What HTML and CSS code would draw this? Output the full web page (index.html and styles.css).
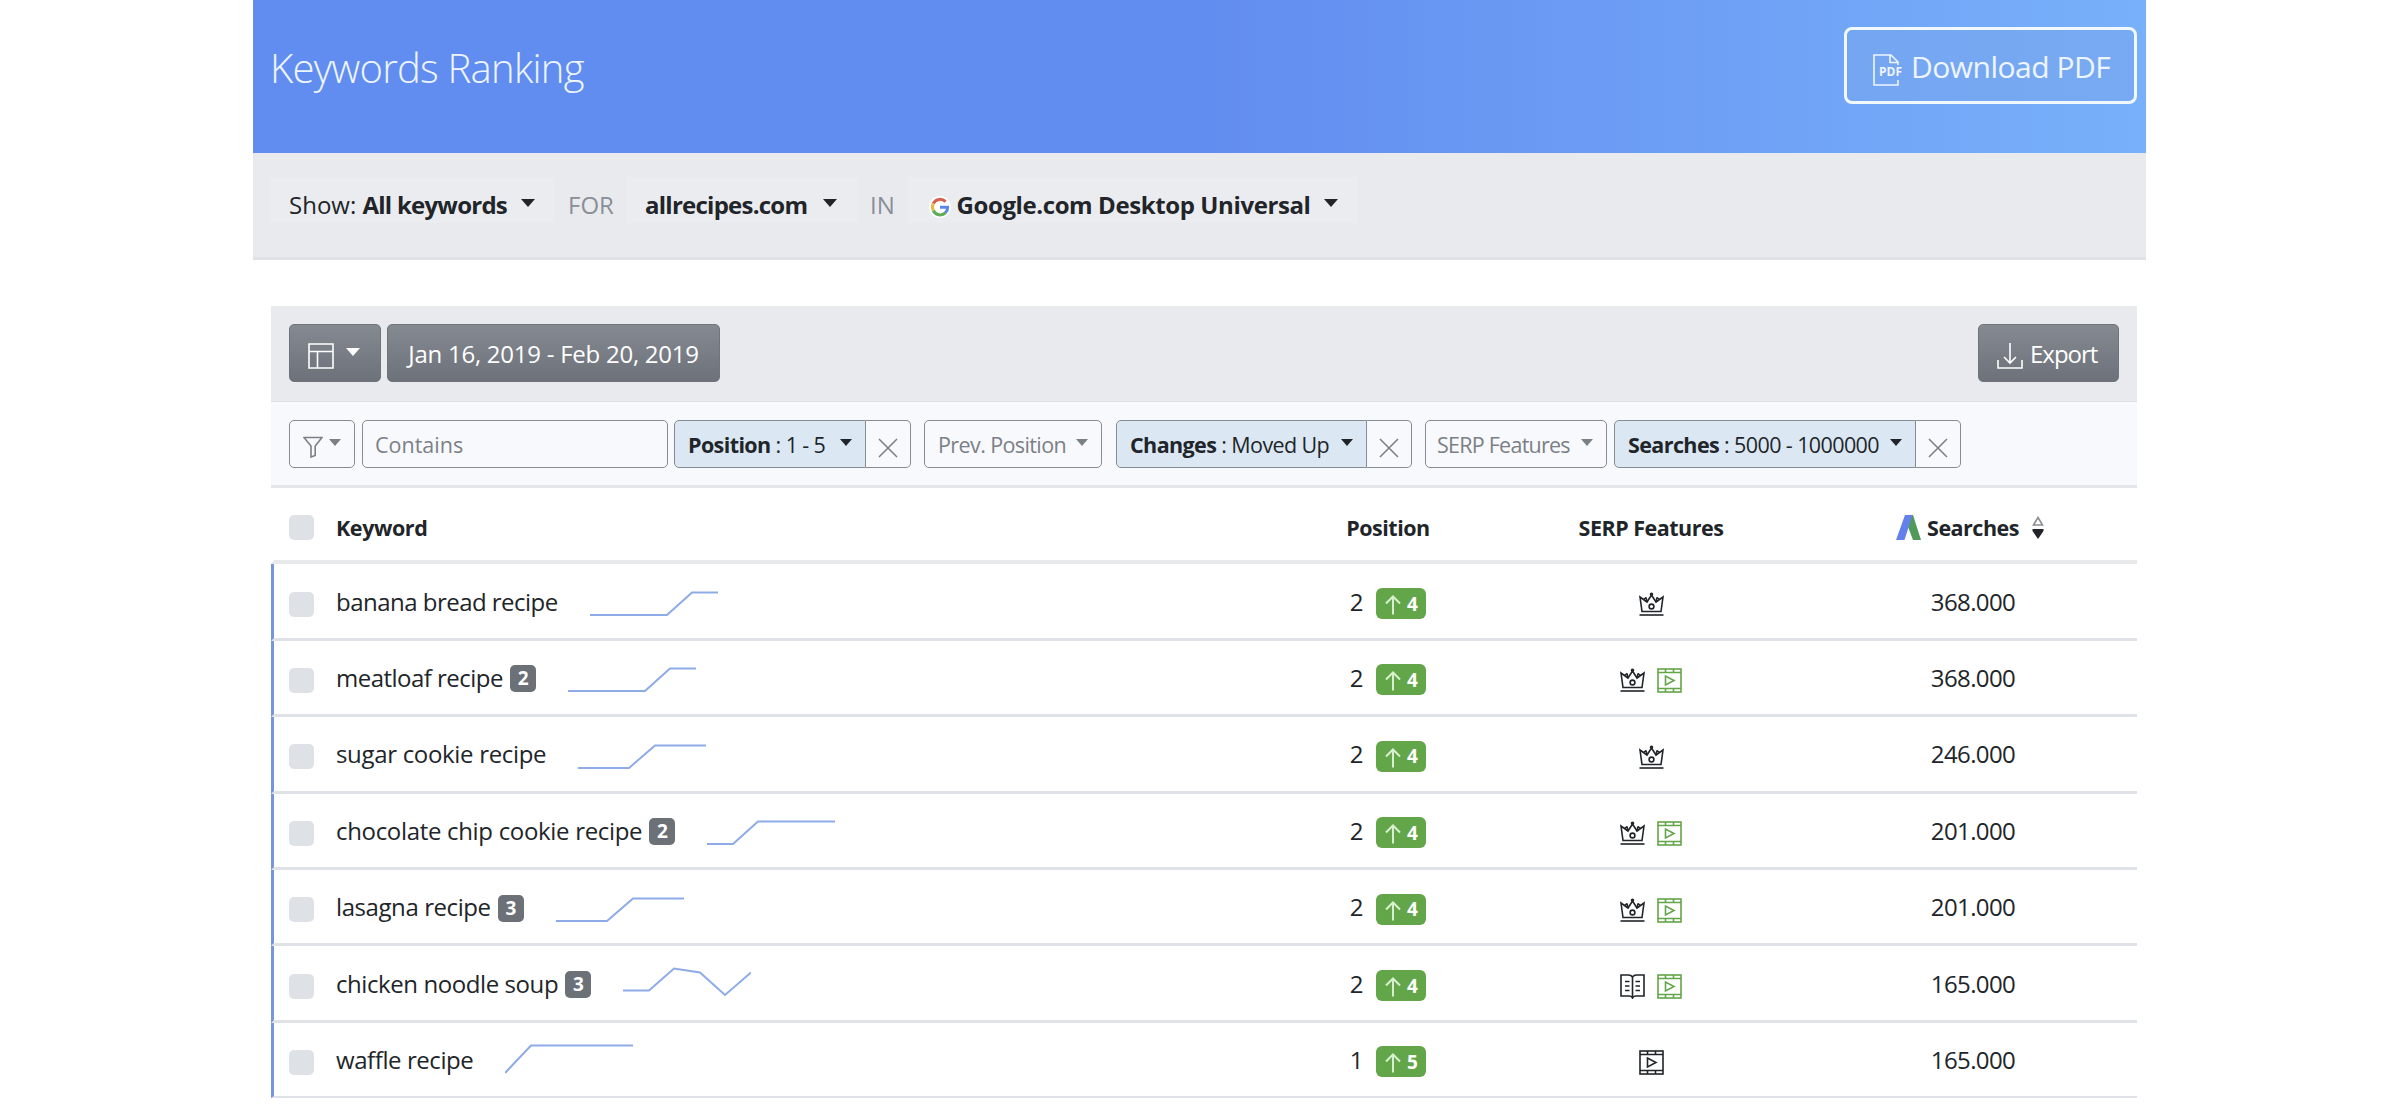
FILE: index.html
```html
<!DOCTYPE html>
<html lang="en">
<head>
    <meta charset="UTF-8">
    <meta name="viewport" content="width=device-width, initial-scale=1.0">
    <title>Keywords Ranking</title>
    <link rel="stylesheet" href="styles.css">
</head>
<body>

    <!-- shared icons -->
    <svg class="sprite">
        <symbol id="close" viewBox="0 0 20 20"><path d="M1 1L19 19M19 1L1 19"/></symbol>
        <symbol id="up" viewBox="0 0 16 20"><path d="M8 19.500V2M1 8.500L8 1.500L15 8.500"/></symbol>
        <symbol id="crown" viewBox="0 0 25 25">
            <path d="M3 19.500H22L24 5L17 10L12.500 3L8 10L1 5Z"/>
            <path d="M7 5.500L8 10M18 5.500L17 10M7 5.500L4.500 7.500M18 5.500L20.500 7.500"/>
            <circle cx="12.500" cy="2.300" r="1"/>
            <circle cx="12.500" cy="14.500" r="2.400"/>
            <path d="M0.500 23H24.500"/>
        </symbol>
        <symbol id="film" viewBox="0 0 25 25">
            <rect x="1" y="1" width="23" height="23"/>
            <path d="M1 4.500H24M1 20.500H24M8.500 1V4.500M16.500 1V4.500M8.500 20.500V24M16.500 20.500V24M8.500 8V17L17 12.500Z"/>
        </symbol>
        <symbol id="book" viewBox="0 0 25 25">
            <path d="M12.500 3C11.500 1.500 10 1 8.500 1H1V22H9C10.500 22 12 22.500 12.500 24C13 22.500 14.500 22 16 22H24V1H16.500C15 1 13.500 1.500 12.500 3V24"/>
            <path d="M5 7.500H9.500M5 12H9.500M5 16.500H9.500M15.500 7.500H20M15.500 12H20M15.500 16.500H20"/>
        </symbol>
    </svg>

    <div class="page">
        <header class="header">
            <h1>Keywords Ranking</h1>
            <button class="download">
                <svg width="29" height="32" viewBox="0 0 29 32">
                    <path d="M25 11V8L18 1H1V31H25V26M17 1V8.500H25"/>
                    <text x="6" y="22">PDF</text>
                </svg>
                <span>Download PDF</span>
            </button>
        </header>

        <nav class="scope">
            <button class="scope-btn show"><span>Show: <b>All keywords</b></span><i class="caret"></i></button>
            <span class="word for">FOR</span>
            <button class="scope-btn site"><b>allrecipes.com</b><i class="caret"></i></button>
            <span class="word in">IN</span>
            <button class="scope-btn engine">
                <svg width="22" height="22" viewBox="0 0 22 22">
                    <circle cx="11" cy="11" r="11" fill="#fff" stroke="none"/>
                    <path d="M4.300 7.500A7.700 7.700 0 0 1 16.600 5.600" stroke="#d6604d"/>
                    <path d="M4.300 14.500A7.700 7.700 0 0 1 4.300 7.500" stroke="#e9b949"/>
                    <path d="M16.600 16.700A7.700 7.700 0 0 1 4.300 14.500" stroke="#5fae57"/>
                    <path d="M11 11.200H18.600A7.700 7.700 0 0 1 16.400 16.800" stroke="#5b86ea"/>
                </svg>
                <b>Google.com Desktop Universal</b><i class="caret"></i>
            </button>
        </nav>

        <main class="panel">
            <div class="toolbar">
                <button class="tool layout">
                    <svg width="26" height="26" viewBox="0 0 26 26"><path d="M1 1H25V25H1ZM1 8.500H25M9.500 8.500V25"/></svg>
                    <i class="caret"></i>
                </button>
                <button class="tool dates"><span>Jan 16, 2019 - Feb 20, 2019</span></button>
                <button class="tool export">
                    <svg width="26" height="26" viewBox="0 0 26 26"><path d="M1 17V25H25V17M13 0V19.500M7 14L13 20L19 14"/></svg>
                    <span>Export</span>
                </button>
            </div>

            <div class="filters">
                <button class="filter funnel">
                    <svg width="20" height="22" viewBox="0 0 20 22"><path d="M1 1.500H19L12.200 10V19.500L8 21V10Z"/></svg>
                    <i class="caret"></i>
                </button>
                <input class="contains" type="text" placeholder="Contains">
                <div class="group position">
                    <button class="filter on"><span><b>Position</b> : 1 - 5</span><i class="caret"></i></button>
                    <button class="filter remove"><svg><use href="#close"/></svg></button>
                </div>
                <button class="filter prev"><span>Prev. Position</span><i class="caret"></i></button>
                <div class="group changes">
                    <button class="filter on"><span><b>Changes</b> : Moved Up</span><i class="caret"></i></button>
                    <button class="filter remove"><svg><use href="#close"/></svg></button>
                </div>
                <button class="filter serp-filter"><span>SERP Features</span><i class="caret"></i></button>
                <div class="group searches">
                    <button class="filter on"><span><b>Searches</b> : 5000 - 1000000</span><i class="caret"></i></button>
                    <button class="filter remove"><svg><use href="#close"/></svg></button>
                </div>
            </div>

            <div class="table">
                <div class="row head">
                    <div class="cell keyword"><i class="check"></i><span>Keyword</span></div>
                    <div class="cell">Position</div>
                    <div class="cell">SERP Features</div>
                    <div class="cell volume">
                        <svg class="ads" width="25" height="25" viewBox="0 0 25 25">
                            <path d="M11 0H17L25 25H17L11 9Z" fill="#4f9a5b"/>
                            <path d="M9 0H16.500L8.500 25H0Z" fill="#6480ea"/>
                        </svg>
                        <span>Searches</span>
                        <svg class="sort" width="12" height="24" viewBox="0 0 12 24">
                            <path d="M6 1.500L10.500 9H1.500Z" fill="none" stroke="#8a8d91"/>
                            <path d="M0.500 13H11.500V15L6 23L0.500 15Z" fill="#212529"/>
                        </svg>
                    </div>
                </div>

                <div class="row">
                    <div class="cell keyword">
                        <i class="check"></i><span class="tight">banana bread recipe</span>
                        <svg class="spark" viewBox="0 0 128 48"><polyline points="0,38 77,38 102,15.500 128,15.500"/></svg>
                    </div>
                    <div class="cell">2 <span class="change"><svg><use href="#up"/></svg>4</span></div>
                    <div class="cell icons"><svg><use href="#crown"/></svg></div>
                    <div class="cell volume">368.000</div>
                </div>
                <div class="row">
                    <div class="cell keyword">
                        <i class="check"></i><span class="tight">meatloaf recipe</span><span class="count">2</span>
                        <svg class="spark" viewBox="0 0 128 48"><polyline points="0,38 77,38 102,15.500 128,15.500"/></svg>
                    </div>
                    <div class="cell">2 <span class="change"><svg><use href="#up"/></svg>4</span></div>
                    <div class="cell icons"><svg><use href="#crown"/></svg><svg class="green"><use href="#film"/></svg></div>
                    <div class="cell volume">368.000</div>
                </div>
                <div class="row">
                    <div class="cell keyword">
                        <i class="check"></i><span class="loose">sugar cookie recipe</span>
                        <svg class="spark" viewBox="0 0 128 48"><polyline points="0,38 51,38 77,15.500 128,15.500"/></svg>
                    </div>
                    <div class="cell">2 <span class="change"><svg><use href="#up"/></svg>4</span></div>
                    <div class="cell icons"><svg><use href="#crown"/></svg></div>
                    <div class="cell volume">246.000</div>
                </div>
                <div class="row">
                    <div class="cell keyword">
                        <i class="check"></i><span class="loose">chocolate chip cookie recipe</span><span class="count">2</span>
                        <svg class="spark" viewBox="0 0 128 48"><polyline points="0,38 26,38 51,15.500 128,15.500"/></svg>
                    </div>
                    <div class="cell">2 <span class="change"><svg><use href="#up"/></svg>4</span></div>
                    <div class="cell icons"><svg><use href="#crown"/></svg><svg class="green"><use href="#film"/></svg></div>
                    <div class="cell volume">201.000</div>
                </div>
                <div class="row">
                    <div class="cell keyword">
                        <i class="check"></i><span>lasagna recipe</span><span class="count">3</span>
                        <svg class="spark" viewBox="0 0 128 48"><polyline points="0,38 51,38 77,15.500 128,15.500"/></svg>
                    </div>
                    <div class="cell">2 <span class="change"><svg><use href="#up"/></svg>4</span></div>
                    <div class="cell icons"><svg><use href="#crown"/></svg><svg class="green"><use href="#film"/></svg></div>
                    <div class="cell volume">201.000</div>
                </div>
                <div class="row">
                    <div class="cell keyword">
                        <i class="check"></i><span>chicken noodle soup</span><span class="count">3</span>
                        <svg class="spark" viewBox="0 0 128 48"><polyline points="0,31.500 26,31.500 51,9.500 77,13.500 102,36 128,13.500"/></svg>
                    </div>
                    <div class="cell">2 <span class="change"><svg><use href="#up"/></svg>4</span></div>
                    <div class="cell icons"><svg><use href="#book"/></svg><svg class="green"><use href="#film"/></svg></div>
                    <div class="cell volume">165.000</div>
                </div>
                <div class="row">
                    <div class="cell keyword">
                        <i class="check"></i><span>waffle recipe</span>
                        <svg class="spark" viewBox="0 0 128 48"><polyline points="0,38 26,10.500 128,10.500"/></svg>
                    </div>
                    <div class="cell">1 <span class="change"><svg><use href="#up"/></svg>5</span></div>
                    <div class="cell icons"><svg><use href="#film"/></svg></div>
                    <div class="cell volume">165.000</div>
                </div>
            </div>
        </main>
    </div>

</body>
</html>
```
FILE: styles.css
```css
* {
    box-sizing: border-box;
}
body {
    margin: 0;
    height: 1111px;
    overflow: hidden;
    background-color: #fff;
    color: #212529;
    font-family: "Open Sans", "Noto Sans", sans-serif;
    font-size: 24px;
}
button, input {
    font-family: inherit;
    margin: 0;
    padding: 0;
    border: none;
    background: none;
    color: inherit;
    white-space: nowrap;
}
button {
    display: flex;
    align-items: center;
    cursor: pointer;
}
svg {
    fill: none;
    stroke: currentColor;
    stroke-width: 1.6;
    flex: none;
}
.sprite {
    display: none;
}
.caret {
    flex: none;
    border: 7px solid transparent;
    border-top: 8px solid currentColor;
    border-bottom: none;
}
.page {
    width: 1893px;
    margin-left: 253px;
}

/* header */
.header {
    height: 153px;
    padding: 27px 9px 0 17px;
    display: flex;
    justify-content: space-between;
    align-items: flex-start;
    background: linear-gradient(90deg, #628df0 50%, #78b0fa 100%);
    color: #eef5ff;
}
h1 {
    margin: 14px 0 0;
    font-size: 40px;
    font-weight: 300;
    line-height: 54px;
    letter-spacing: -0.75px;
}
.download {
    width: 293px;
    height: 77px;
    padding-left: 26px;
    border: 3px solid #f2f8ff;
    border-radius: 8px;
    background-color: rgba(120, 165, 235, 0.5);
    font-size: 30px;
    letter-spacing: -0.5px;
    gap: 9px;
}
.download svg {
    margin-top: 8px;
}
.download span {
    margin-top: 2px;
}
.download text {
    font-size: 12px;
    font-weight: 700;
    letter-spacing: 0;
    fill: currentColor;
    stroke: none;
}

/* scope bar */
.scope {
    height: 107px;
    padding: 24px 0 0 18px;
    display: flex;
    align-items: flex-start;
    background-color: #e9eaee;
    border-bottom: 3px solid #dee2e6;
}
.scope-btn {
    height: 46px;
    padding: 13px 20px 4px 18px;
    justify-content: space-between;
    background-color: #ebecef;
    font-size: 24px;
}
.scope-btn b {
    letter-spacing: -0.75px;
}
.scope-btn .caret {
    margin-top: -3px;
}
.show {
    width: 284px;
}
.site {
    width: 230px;
}
.engine {
    width: 450px;
}
.engine svg {
    stroke-width: 3;
    margin: 4px 0 0 3px;
}
.engine b {
    margin: 0 8px 0 0;
    letter-spacing: -0.4px;
}
.word {
    line-height: 55px;
    text-align: center;
    color: #8a8f96;
}
.for {
    width: 72px;
}
.in {
    width: 51px;
}

/* toolbar */
.panel {
    width: 1866px;
    margin: 46px 0 0 18px;
}
.toolbar {
    height: 96px;
    padding: 18px;
    display: flex;
    gap: 6px;
    background-color: #e9eaee;
    border-bottom: 1px solid #dcdfe4;
}
.tool {
    height: 58px;
    border: 1px solid #70757d;
    border-radius: 5px;
    background: linear-gradient(#858a91, #6d717a);
    color: #fff;
    font-size: 24px;
    letter-spacing: -0.25px;
}
.tool svg {
    margin-top: 6px;
}
.layout {
    width: 92px;
    padding-left: 18px;
    gap: 12px;
}
.layout .caret {
    margin-top: -2px;
}
.dates {
    width: 333px;
    justify-content: center;
}
.export {
    width: 141px;
    margin-left: auto;
    padding-left: 18px;
    gap: 7px;
    letter-spacing: -1px;
}

/* filters */
.filters {
    height: 86px;
    padding: 18px 18px 0;
    display: flex;
    background-color: #f8f9fc;
    border-bottom: 3px solid #e4e6ea;
}
.filter, .contains {
    height: 48px;
    padding: 0 13px;
    border: 1.5px solid #868c94;
    border-radius: 5px;
    justify-content: space-between;
    color: #7b8087;
    font-size: 21.5px;
}
.filter {
    letter-spacing: -0.6px;
}
.filter .caret {
    margin-top: -3px;
    border-width: 7px 6px 0;
}
.funnel {
    width: 66px;
}
.funnel svg {
    margin-top: 6px;
}
.contains {
    width: 306px;
    margin: 0 6px 0 7px;
    padding: 0 12px;
}
.contains::placeholder {
    color: #7b8087;
    opacity: 1;
}
.group {
    display: flex;
}
.filter.on {
    flex: 1;
    border-radius: 5px 0 0 5px;
    background-color: #dbe8f4;
    color: #212529;
}
.remove {
    width: 45px;
    border-left: none;
    border-radius: 0 5px 5px 0;
    justify-content: center;
}
.remove svg {
    width: 20px;
    height: 20px;
    margin-top: 7px;
}
.position {
    width: 237px;
}
.prev {
    width: 178px;
    margin: 0 14px 0 13px;
}
.changes {
    width: 296px;
}
.serp-filter {
    width: 182px;
    padding: 0 13px 0 11px;
    margin: 0 7px 0 13px;
    letter-spacing: -0.75px;
}
.searches {
    width: 347px;
}

/* table */
.row {
    height: 76.4px;
    display: grid;
    grid-template-columns: 1fr 210px 316px 328px;
    border-left: 3px solid #7596da;
    border-bottom: 3px solid #dfe2e6;
}
.row:last-child {
    height: 75px;
    border-bottom-width: 2px;
}
.head {
    border-left-color: transparent;
    border-bottom: 4px solid #e8e9eb;
    font-size: 21.5px;
    font-weight: 700;
    letter-spacing: -0.5px;
}
.cell {
    display: flex;
    align-items: center;
    justify-content: center;
    white-space: nowrap;
}
.head .cell {
    padding-top: 7px;
}
.keyword {
    justify-content: flex-start;
    padding-left: 15px;
    letter-spacing: -0.42px;
}
.tight {
    letter-spacing: -0.52px;
}
.loose {
    letter-spacing: -0.32px;
}
.check {
    width: 25px;
    height: 25px;
    margin: 6px 22px 0 0;
    border-radius: 5px;
    background-color: #dee2e6;
}
.head .check {
    margin-top: 0;
}
.count {
    height: 27px;
    min-width: 26px;
    margin: 3px 0 0 7px;
    border-radius: 5px;
    background-color: #6c7077;
    color: #fff;
    font-size: 19px;
    font-weight: 700;
    line-height: 27px;
    text-align: center;
}
.spark {
    width: 128px;
    height: 48px;
    margin-left: 32px;
    color: #8eabe8;
    stroke-width: 2;
}
.change {
    width: 50px;
    height: 31px;
    margin: 5px 0 0 13px;
    display: flex;
    align-items: center;
    justify-content: center;
    gap: 6px;
    border-radius: 6px;
    background-color: #63a549;
    color: #fff;
    font-size: 19px;
    font-weight: 700;
}
.change svg {
    width: 16px;
    height: 20px;
    margin-top: 3px;
    color: #d9f0d0;
    stroke-width: 2;
}
.icons {
    gap: 12px;
}
.icons svg {
    width: 25px;
    height: 25px;
    margin-top: 7px;
}
.green {
    color: #63a549;
}
.ads, .sort {
    stroke: none;
}
.ads {
    margin: 0 6px 0 0;
}
.sort {
    margin-left: 13px;
}
.volume {
    letter-spacing: -0.6px;
}
.head .volume {
    padding-right: 6px;
    letter-spacing: -0.5px;
}
```
